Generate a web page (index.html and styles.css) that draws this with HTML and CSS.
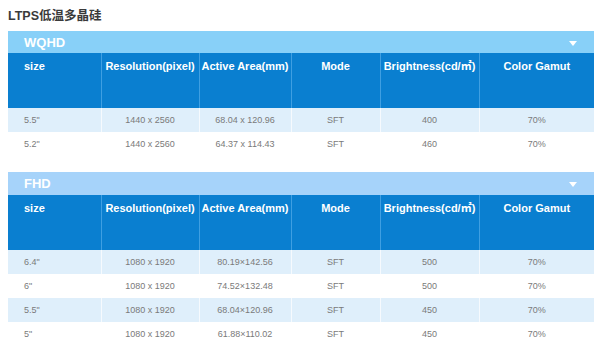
FILE: index.html
```html
<!DOCTYPE html>
<html lang="zh">
<head>
<meta charset="utf-8">
<title>LTPS低温多晶硅</title>
<link rel="stylesheet" href="styles.css">
</head>
<body>
<div class="page">
  <h1 class="title">LTPS低温多晶硅</h1>

  <section class="group">
    <div class="bar bar-wqhd"><span>WQHD</span><i class="caret"></i></div>
    <table class="spec">
      <colgroup>
        <col class="c1"><col class="c2"><col class="c3"><col class="c4"><col class="c5"><col class="c6">
      </colgroup>
      <thead>
        <tr><th class="first">size</th><th>Resolution(pixel)</th><th>Active Area(mm)</th><th>Mode</th><th>Brightness(cd/㎡)</th><th>Color Gamut</th></tr>
      </thead>
      <tbody>
        <tr><td class="first">5.5"</td><td>1440 x 2560</td><td>68.04 x 120.96</td><td>SFT</td><td>400</td><td>70%</td></tr>
        <tr><td class="first">5.2"</td><td>1440 x 2560</td><td>64.37 x 114.43</td><td>SFT</td><td>460</td><td>70%</td></tr>
      </tbody>
    </table>
  </section>

  <section class="group">
    <div class="bar bar-fhd"><span>FHD</span><i class="caret"></i></div>
    <table class="spec">
      <colgroup>
        <col class="c1"><col class="c2"><col class="c3"><col class="c4"><col class="c5"><col class="c6">
      </colgroup>
      <thead>
        <tr><th class="first">size</th><th>Resolution(pixel)</th><th>Active Area(mm)</th><th>Mode</th><th>Brightness(cd/㎡)</th><th>Color Gamut</th></tr>
      </thead>
      <tbody>
        <tr><td class="first">6.4"</td><td>1080 x 1920</td><td>80.19×142.56</td><td>SFT</td><td>500</td><td>70%</td></tr>
        <tr><td class="first">6"</td><td>1080 x 1920</td><td>74.52×132.48</td><td>SFT</td><td>500</td><td>70%</td></tr>
        <tr><td class="first">5.5"</td><td>1080 x 1920</td><td>68.04×120.96</td><td>SFT</td><td>450</td><td>70%</td></tr>
        <tr><td class="first">5"</td><td>1080 x 1920</td><td>61.88×110.02</td><td>SFT</td><td>450</td><td>70%</td></tr>
      </tbody>
    </table>
  </section>
</div>
</body>
</html>
```

FILE: styles.css
```css
html, body {
  margin: 0;
  padding: 0;
  background: #ffffff;
}

.page {
  width: 586px;
  padding: 0 6px 0 8px;
  font-family: "Liberation Sans", Arial, "Noto Sans CJK SC", sans-serif;
}

.title {
  margin: 0;
  height: 31px;
  line-height: 32px;
  font-size: 12.5px;
  font-weight: bold;
  color: #3a3a3a;
  font-family: "Liberation Sans", "Noto Sans CJK SC", sans-serif;
}

.group + .group {
  margin-top: 16px;
}

.bar {
  height: 22px;
  display: flex;
  align-items: center;
  justify-content: space-between;
  padding: 0 17px 0 16px;
  color: #ffffff;
  font-size: 13px;
  font-weight: bold;
}

.bar-wqhd {
  background: #88d0f8;
}

.bar-fhd {
  height: 23px;
  background: #a6d3fa;
}

.caret {
  width: 0;
  height: 0;
  border-left: 4px solid transparent;
  border-right: 4px solid transparent;
  border-top: 5px solid #ffffff;
  margin-top: 2px;
}

.spec {
  width: 586px;
  border-collapse: collapse;
  table-layout: fixed;
}

.c1 { width: 93px; }
.c2 { width: 98px; }
.c3 { width: 92px; }
.c4 { width: 89px; }
.c5 { width: 99px; }
.c6 { width: 115px; }

.spec th {
  height: 55px;
  box-sizing: border-box;
  padding: 7px 2px 0;
  vertical-align: top;
  background: #0a7fd0;
  color: #ffffff;
  font-size: 11px;
  line-height: 13px;
  font-weight: bold;
  text-align: center;
  white-space: nowrap;
  border-right: 1px solid #3f9fe2;
}

.spec th:last-child,
.spec td:last-child {
  border-right: none;
}

.spec td {
  height: 24px;
  box-sizing: border-box;
  padding: 0 2px;
  font-size: 9px;
  color: #7a7a7a;
  text-align: center;
  vertical-align: middle;
  border-right: 1px solid rgba(255, 255, 255, 0.7);
}

.spec tbody tr:nth-child(odd) td {
  background: #dfeffb;
}

.spec .first {
  text-align: left;
  padding-left: 16px;
}
```
